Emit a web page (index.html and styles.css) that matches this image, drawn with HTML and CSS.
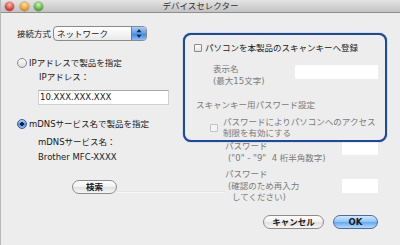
FILE: index.html
```html
<!DOCTYPE html>
<html lang="ja">

<head>
    <meta charset="UTF-8">
    <title>デバイスセレクター</title>
    <link rel="stylesheet" href="styles.css">
</head>

<body>
    <div class="window">
        <div class="titlebar">
            <div class="lights">
                <span class="light red"></span>
                <span class="light yellow"></span>
                <span class="light green"></span>
            </div>
            <div class="title">デバイスセレクター</div>
            <div></div>
        </div>

        <div class="content">
            <div class="left-col">
                <div class="conn-row">
                    <span class="conn-label">接続方式</span>
                    <div class="select">
                        <span class="select-text">ネットワーク</span>
                        <span class="stepper">
                            <svg width="14" height="15" viewBox="0 0 14 15">
                                <polygon points="7,3 9.5,6.3 4.5,6.3" fill="#1b2a44" />
                                <polygon points="7,12 9.5,8.7 4.5,8.7" fill="#1b2a44" />
                            </svg>
                        </span>
                    </div>
                </div>
                <div class="radio-row ip-radio">
                    <span class="radio"></span>
                    <span>IPアドレスで製品を指定</span>
                </div>
                <div class="sub-label ip-label">IPアドレス：</div>
                <div class="text-field ip-field">10.XXX.XXX.XXX</div>
                <div class="radio-row mdns-radio">
                    <span class="radio checked"></span>
                    <span>mDNSサービス名で製品を指定</span>
                </div>
                <div class="sub-label mdns-label">mDNSサービス名：</div>
                <div class="sub-label service-name">Brother MFC-XXXX</div>
                <div class="search-line">
                    <button class="pill-button search">検索</button>
                    <span class="groove"></span>
                </div>
            </div>

            <div class="right-col">
                <div class="pw-group first">
                    <div class="pw-label">
                        <div>パスワード</div>
                        <div class="indent">("0" - "9"&nbsp; 4 桁半角数字)</div>
                    </div>
                    <div class="text-field pw-field"></div>
                </div>
                <div class="pw-group second">
                    <div class="pw-label">
                        <div>パスワード</div>
                        <div class="indent">(確認のため再入力</div>
                        <div class="indent more">してください)</div>
                    </div>
                    <div class="text-field pw-field"></div>
                </div>
            </div>
        </div>

        <div class="footer">
            <button class="pill-button cancel">キャンセル</button>
            <button class="pill-button default">OK</button>
        </div>

        <!-- 強調表示の枠 -->
        <div class="callout">
            <div class="check-row main-check">
                <span class="checkbox"></span>
                <span>パソコンを本製品のスキャンキーへ登録</span>
            </div>
            <div class="name-row">
                <div class="name-label">
                    <div>表示名</div>
                    <div>(最大15文字)</div>
                </div>
                <div class="text-field name-field"></div>
            </div>
            <div class="section-label">スキャンキー用パスワード設定</div>
            <div class="check-row sub-check">
                <span class="checkbox disabled"></span>
                <div class="sub-check-text">
                    <div>パスワードによりパソコンへのアクセス</div>
                    <div>制限を有効にする</div>
                </div>
            </div>
        </div>
    </div>
</body>

</html>
```

FILE: styles.css
```css
body {
    margin: 0;
    font-family: "DejaVu Sans", "Noto Sans CJK JP", sans-serif;
    font-size: 8.5px;
    color: #1a1a1a;
}

.window {
    position: relative;
    width: 400px;
    height: 245px;
    box-sizing: border-box;
    background: #ededed;
    border-left: 1px solid #b9b9b9;
    overflow: hidden;
}

/* タイトルバー */
.titlebar {
    display: grid;
    grid-template-columns: 1fr auto 1fr;
    align-items: center;
    height: 13px;
    box-sizing: border-box;
    background: linear-gradient(#e4e4e4, #c3c3c3);
    border-bottom: 1px solid #8f8f8f;
}

.lights {
    display: flex;
    gap: 5.5px;
    padding-left: 4px;
}

.light {
    width: 9px;
    height: 9px;
    border-radius: 50%;
    box-shadow: 0 0 0 0.5px rgba(0, 0, 0, 0.35);
}

.red {
    background: radial-gradient(circle at 50% 30%, #ffc0b8, #e2463f 55%, #a51e1a);
}

.yellow {
    background: radial-gradient(circle at 50% 30%, #ffe2a8, #eea235 55%, #b06a12);
}

.green {
    background: radial-gradient(circle at 50% 30%, #d2f5b8, #62b846 55%, #2f7a1c);
}

.title {
    color: #303030;
    line-height: 12px;
}

/* 本体 */
.content {
    display: flex;
    height: 202px;
    padding-left: 16px;
}

.left-col {
    width: 208px;
    display: flex;
    flex-direction: column;
    align-items: flex-start;
}

.conn-row {
    display: flex;
    align-items: center;
    margin-top: 13px;
    height: 15px;
}

.conn-label {
    width: 34px;
    line-height: 10px;
}

.select {
    display: flex;
    align-items: center;
    width: 94px;
    height: 15px;
    box-sizing: border-box;
    margin-left: 2px;
    border: 1px solid #8a8a8a;
    border-radius: 4px;
    background: linear-gradient(#ffffff, #e9e9e9);
    overflow: hidden;
}

.select-text {
    flex: 1;
    padding-left: 3px;
    line-height: 10px;
}

.stepper {
    display: flex;
    width: 14px;
    height: 15px;
    background: linear-gradient(#b6d6fb, #5b9ae8 50%, #3a7fe0 51%, #9cc8f8);
    border-left: 1px solid #5a7fb8;
}

.radio-row {
    display: flex;
    align-items: center;
    gap: 2px;
    height: 10px;
    line-height: 10px;
}

.ip-radio {
    margin-top: 17px;
}

.mdns-radio {
    margin-top: 14px;
}

.radio {
    width: 10px;
    height: 10px;
    box-sizing: border-box;
    border-radius: 50%;
    border: 1px solid #8a8a8a;
    background: linear-gradient(#ffffff, #dcdcdc);
}

.radio.checked {
    border-color: #3c5f9a;
    background: radial-gradient(circle, #15213a 0 1.6px, transparent 2.1px),
        linear-gradient(#b9d9fc, #4e90e6 55%, #8cc0f6);
}

.sub-label {
    line-height: 10px;
    margin-left: 21px;
}

.ip-label {
    margin-top: 4px;
    margin-left: 22px;
}

.mdns-label {
    margin-top: 8px;
}

.service-name {
    margin-top: 5px;
}

.text-field {
    box-sizing: border-box;
    background: #ffffff;
    border: 1px solid #d0d0d0;
    border-top-color: #a8a8a8;
}

.ip-field {
    width: 131px;
    height: 15px;
    margin-top: 8px;
    margin-left: 21px;
    padding-left: 1px;
    line-height: 13px;
}

.search-line {
    display: flex;
    align-self: stretch;
    margin-top: 18px;
    margin-left: 55px;
}

.groove {
    flex: 1;
    align-self: flex-end;
    margin-bottom: 1px;
    border-top: 1px solid #e4e4e4;
    border-bottom: 1px solid #f7f7f7;
}

.pill-button {
    height: 14px;
    padding: 0;
    border: 1px solid #8c8c8c;
    border-radius: 7px;
    background: linear-gradient(#ffffff, #f0f0f0 50%, #e0e0e0 51%, #f6f6f6);
    font-family: "DejaVu Sans", "Noto Sans CJK JP", sans-serif;
    font-size: 8.5px;
    font-weight: bold;
    line-height: 12px;
    color: #1a1a1a;
}

.search {
    width: 45px;
}

/* 右側のパスワード欄 */
.right-col {
    width: 153px;
    color: #7a7a7a;
}

.pw-group {
    display: flex;
    justify-content: space-between;
    align-items: flex-start;
}

.pw-group.first {
    margin-top: 127px;
    line-height: 12px;
}

.pw-group.second {
    margin-top: 5px;
    line-height: 11.5px;
}

.indent {
    padding-left: 3px;
}

.indent.more {
    padding-left: 7px;
}

.pw-field {
    width: 36px;
    height: 14px;
    border-color: #ffffff;
}

.first .pw-field {
    margin-top: 1px;
}

.second .pw-field {
    margin-top: 10px;
}

.footer {
    display: flex;
    justify-content: flex-end;
    gap: 9px;
    padding-right: 22px;
}

.cancel {
    width: 61px;
}

.default {
    width: 45px;
    border-color: #4f6c9c;
    background: linear-gradient(#d2e8fd, #8ec2f6 50%, #64a6ee 51%, #b4dafc);
}

/* 強調枠 */
.callout {
    position: absolute;
    left: 182px;
    top: 33px;
    width: 204px;
    height: 109px;
    box-sizing: border-box;
    border: 2px solid #1f4a9c;
    border-radius: 8px;
    background: #ededed;
    box-shadow: 0 0 1px #1f4a9c;
    color: #7a7a7a;
}

.check-row {
    display: flex;
    align-items: center;
}

.main-check {
    gap: 3px;
    padding-top: 8px;
    padding-left: 9px;
    line-height: 10px;
    color: #1a1a1a;
}

.checkbox {
    width: 8px;
    height: 8px;
    box-sizing: border-box;
    border: 1px solid #8a8a8a;
    border-radius: 1px;
    background: linear-gradient(#ffffff, #e2e2e2);
}

.checkbox.disabled {
    border-color: #c2c2c2;
    background: #f5f5f5;
}

.name-row {
    display: flex;
    align-items: flex-start;
    margin-top: 10px;
    padding-left: 28px;
    padding-right: 7px;
}

.name-label {
    line-height: 12px;
}

.name-field {
    width: 83px;
    height: 14px;
    margin-top: 2px;
    margin-left: auto;
    border-color: #ffffff;
}

.section-label {
    margin-top: 13px;
    margin-left: 11px;
    line-height: 10px;
}

.sub-check {
    gap: 5px;
    margin-top: 6.5px;
    margin-left: 25px;
    line-height: 11px;
}
```
